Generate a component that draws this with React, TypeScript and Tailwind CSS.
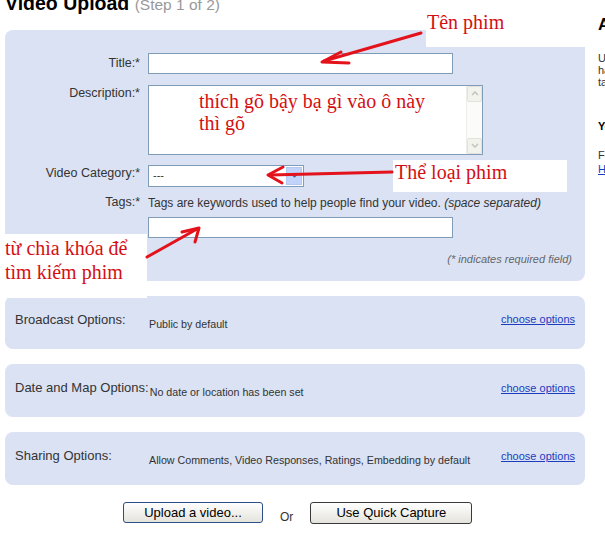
import React from 'react';

const optionRows = [
  { label: 'Broadcast Options:', value: 'Public by default', linkTop: 'pt-[17px]' },
  { label: 'Date and Map Options:', value: 'No date or location has been set', linkTop: 'pt-[18px]' },
  { label: 'Sharing Options:', value: 'Allow Comments, Video Responses, Ratings, Embedding by default', linkTop: 'pt-[18px]' },
];

const Arrows: React.FC = () => (
  <svg className="absolute left-0 top-0 pointer-events-none" width="605" height="536" viewBox="0 0 605 536">
    <g stroke="#e3121b" strokeWidth="3" fill="none" strokeLinecap="round" strokeLinejoin="round">
      {/* Tên phim */}
      <line x1="421" y1="33" x2="324" y2="61" />
      <polyline points="341,52 322,62 349,63" />
      {/* Thể loại phim */}
      <line x1="392" y1="172" x2="270" y2="175" />
      <polyline points="283,167 268,175 282,183" />
      {/* từ chìa khóa */}
      <line x1="147" y1="257" x2="197" y2="229" />
      <polyline points="182,232 199,228 195,242" />
    </g>
  </svg>
);

export default function App() {
  return (
    <div className="relative w-[605px] h-[536px] overflow-hidden bg-white font-['Liberation_Sans',Arial,sans-serif] text-[#333]">
      <div className="flex">
        {/* Left column */}
        <div className="w-[585px] shrink-0 pl-[5px]">
          <h1 className="-mt-[6px] mb-[16px] text-[19.5px] leading-none font-bold text-black whitespace-nowrap">
            Video Upload <span className="text-[15.5px] font-normal text-[#999]">(Step 1 of 2)</span>
          </h1>

          {/* Main form */}
          <div className="h-[251px] rounded-[8px] bg-[#dae2f4] pt-[23px]">
            <div className="flex items-center h-[21px]">
              <label className="w-[135px] text-right text-[12.5px]">Title:*</label>
              <input type="text" className="ml-[8px] w-[305px] h-[21px] border border-[#7f9db9] bg-white outline-none" />
            </div>

            <div className="flex items-start mt-[11px]">
              <label className="w-[135px] text-right text-[12.5px] leading-[15px] pt-[1px]">Description:*</label>
              <div className="ml-[8px] w-[335px] h-[70px] border border-[#7f9db9] bg-white flex">
                <div className="flex-1 pt-[4px] pl-[50px] font-['Liberation_Serif','Times_New_Roman',serif] text-[20px] leading-[22px] text-[#d40f14]">
                  thích gõ bậy bạ gì vào ô này<br />thì gõ
                </div>
                <div className="w-[16px] flex flex-col justify-between bg-[#fbfbf9] border-l border-[#eeeee8]">
                  <div className="h-[16px] flex items-center justify-center bg-[#f3f3ee] border border-[#e2e2da] rounded-[2px]">
                    <svg width="8" height="5" viewBox="0 0 8 5"><polyline points="1,4 4,1 7,4" stroke="#c4c4bc" strokeWidth="1.5" fill="none" /></svg>
                  </div>
                  <div className="h-[16px] flex items-center justify-center bg-[#f3f3ee] border border-[#e2e2da] rounded-[2px]">
                    <svg width="8" height="5" viewBox="0 0 8 5"><polyline points="1,1 4,4 7,1" stroke="#c4c4bc" strokeWidth="1.5" fill="none" /></svg>
                  </div>
                </div>
              </div>
            </div>

            <div className="flex items-start mt-[10px]">
              <label className="w-[135px] text-right text-[12.5px] leading-[15px] pt-[1px]">Video Category:*</label>
              <div className="ml-[8px] w-[156px] h-[22px] border border-[#7f9db9] bg-white flex items-center">
                <span className="flex-1 pl-[4px] text-[11px] leading-none">---</span>
                <div className="w-[16px] h-[18px] mr-[1px] bg-[#c1d3fb] border border-[#b5c8f0] flex items-center justify-center">
                  <svg width="7" height="4" viewBox="0 0 7 4"><polyline points="1,0.5 3.5,3 6,0.5" stroke="#4d6185" strokeWidth="1.2" fill="none" /></svg>
                </div>
              </div>
            </div>

            <div className="flex items-center mt-[10px] h-[12px]">
              <label className="w-[135px] text-right text-[12.5px]">Tags:*</label>
              <span className="ml-[8px] text-[12px] whitespace-nowrap">
                Tags are keywords used to help people find your video. <i>(space separated)</i>
              </span>
            </div>
            <input type="text" className="block ml-[143px] mt-[8px] w-[305px] h-[21px] border border-[#7f9db9] bg-white outline-none" />

            <p className="mt-[16px] pr-[13px] text-right text-[11px] leading-[11px] italic text-[#666]">
              (* indicates required field)
            </p>
          </div>

          {/* Options */}
          {optionRows.map((row) => (
            <div key={row.label} className="mt-[15px] h-[53px] rounded-[8px] bg-[#dae2f4] flex items-start pl-[10px] pr-[10px]">
              <span className="min-w-[133px] mr-[1px] pt-[16px] text-[13px] leading-[15px] whitespace-nowrap">{row.label}</span>
              <span className="flex-1 pt-[22px] text-[10.7px] leading-[12px] whitespace-nowrap">{row.value}</span>
              <a href="#" className={`${row.linkTop} text-[11px] leading-[12px] text-[#1d3cbe] underline whitespace-nowrap`}>choose options</a>
            </div>
          ))}

          {/* Buttons */}
          <div className="flex items-start mt-[17px]">
            <button className="ml-[118px] w-[140px] h-[21px] rounded-[3px] border border-[#2d4e86] bg-gradient-to-b from-white to-[#e4e3dc] text-[13px] leading-none text-black">
              Upload a video...
            </button>
            <span className="ml-[17px] mt-[9px] text-[12px] leading-none text-[#333]">Or</span>
            <button className="ml-[17px] w-[162px] h-[22px] rounded-[3px] border border-[#3a3a3a] bg-gradient-to-b from-white to-[#e4e3dc] text-[13px] leading-none text-black">
              Use Quick Capture
            </button>
          </div>
        </div>

        {/* Right column */}
        <div className="ml-[13px] shrink-0 w-[200px] whitespace-nowrap">
          <h2 className="mt-[15px] text-[17px] leading-[20px] font-bold text-black">Add a Video</h2>
          <div className="mt-[17px] text-[11px] leading-[12px] text-[#333]">
            <div>Upload your videos here and</div>
            <div>have them shared in minutes,</div>
            <div>taking only a short while.</div>
          </div>
          <div className="mt-[32px] text-[11px] leading-[12px] font-bold text-black">Your Videos</div>
          <div className="mt-[17px] text-[11px] leading-[12px] text-[#333]">For more information, see</div>
          <a href="#" className="block mt-[2px] text-[11px] leading-[12px] text-[#1d3cbe] underline">Help Center</a>
        </div>
      </div>

      {/* Annotations */}
      <div className="absolute left-[426px] top-0 w-[160px] h-[47px] bg-white pt-[11px] pl-[1px] font-['Liberation_Serif','Times_New_Roman',serif] text-[20px] leading-[22px] text-[#d40f14]">
        Tên phim
      </div>
      <div className="absolute left-[393px] top-[160px] w-[174px] h-[32px] bg-white pt-[1px] pl-[2px] font-['Liberation_Serif','Times_New_Roman',serif] text-[20px] leading-[22px] text-[#d40f14]">
        Thể loại phim
      </div>
      <div className="absolute left-0 top-[234px] w-[147px] h-[64px] bg-white pt-[2px] pl-[5px] font-['Liberation_Serif','Times_New_Roman',serif] text-[20px] leading-[24px] text-[#d40f14]">
        từ chìa khóa để<br />tìm kiếm phim
      </div>
      <Arrows />
    </div>
  );
}
